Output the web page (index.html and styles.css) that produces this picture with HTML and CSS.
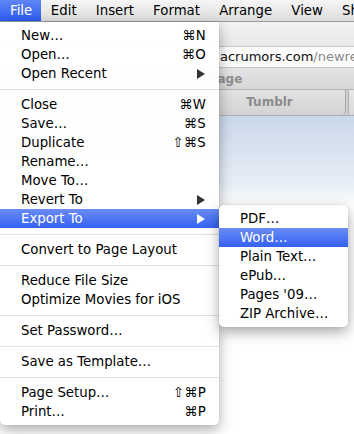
FILE: index.html
```html
<!DOCTYPE html>
<html>
<head>
<meta charset="utf-8">
<link rel="stylesheet" href="styles.css">
</head>
<body>
<div class="menubar">
  <span class="mb-item active">File</span>
  <span class="mb-item">Edit</span>
  <span class="mb-item">Insert</span>
  <span class="mb-item">Format</span>
  <span class="mb-item">Arrange</span>
  <span class="mb-item">View</span>
  <span class="mb-item">Share</span>
</div>
<div class="window">
  <div class="toolbar"></div>
  <div class="urlbar"><span class="url">acrumors.com<span class="path">/newreply.php</span></span></div>
  <div class="bookmarks"><span class="bm">Page</span></div>
  <div class="tabs"><div class="tab">Tumblr</div><div class="tab next"></div></div>
  <div class="content"></div>
</div>

<div class="menu">
  <div class="row"><span>New…</span><span class="sc">⌘N</span></div>
  <div class="row"><span>Open…</span><span class="sc">⌘O</span></div>
  <div class="row"><span>Open Recent</span><span class="arrow"></span></div>
  <div class="sep"></div>
  <div class="row"><span>Close</span><span class="sc">⌘W</span></div>
  <div class="row"><span>Save…</span><span class="sc">⌘S</span></div>
  <div class="row"><span>Duplicate</span><span class="sc">⇧⌘S</span></div>
  <div class="row"><span>Rename…</span></div>
  <div class="row"><span>Move To…</span></div>
  <div class="row"><span>Revert To</span><span class="arrow"></span></div>
  <div class="row hl"><span>Export To</span><span class="arrow"></span></div>
  <div class="sep"></div>
  <div class="row"><span>Convert to Page Layout</span></div>
  <div class="sep"></div>
  <div class="row"><span>Reduce File Size</span></div>
  <div class="row"><span>Optimize Movies for iOS</span></div>
  <div class="sep"></div>
  <div class="row"><span>Set Password…</span></div>
  <div class="sep"></div>
  <div class="row"><span>Save as Template…</span></div>
  <div class="sep"></div>
  <div class="row"><span>Page Setup…</span><span class="sc">⇧⌘P</span></div>
  <div class="row"><span>Print…</span><span class="sc">⌘P</span></div>
</div>

<div class="submenu">
  <div class="row"><span>PDF…</span></div>
  <div class="row hl"><span>Word…</span></div>
  <div class="row"><span>Plain Text…</span></div>
  <div class="row"><span>ePub…</span></div>
  <div class="row"><span>Pages '09…</span></div>
  <div class="row"><span>ZIP Archive…</span></div>
</div>
</body>
</html>
```

FILE: styles.css
```css
* { box-sizing: border-box; }
html, body {
  margin: 0;
  padding: 0;
  width: 354px;
  height: 434px;
  overflow: hidden;
  background: #fff;
  font-family: "DejaVu Sans", "Noto Sans", sans-serif;
  font-size: 13.3px;
  color: #000;
}
body { position: relative; }

.menubar {
  display: flex;
  height: 22px;
  padding-left: 1px;
  background: linear-gradient(#f6f6f6, #dcdcdc);
  border-bottom: 1px solid #9a9a9a;
  white-space: nowrap;
  overflow: hidden;
}
.mb-item {
  flex: none;
  padding: 0 9.6px;
  line-height: 21px;
  height: 21px;
}
.mb-item.active {
  margin-left: -1px;
  padding-left: 10px;
  padding-right: 9px;
  color: #fff;
  background: linear-gradient(#5f86f5, #2c5cf0);
}

.window { display: flex; flex-direction: column; }
.toolbar {
  height: 24px;
  background: linear-gradient(#f2f2f2, #e8e8e8);
}
.urlbar {
  height: 22px;
  padding-left: 220px;
  background: #fbfbfb;
  border-top: 1px solid #c8c8c8;
  border-bottom: 1px solid #c4c4c4;
  line-height: 20px;
  font-size: 13px;
  white-space: nowrap;
  overflow: hidden;
}
.url { color: #111; }
.path { color: #8a8a8a; }
.bookmarks {
  height: 22px;
  padding-left: 209px;
  background: linear-gradient(#e4e4e4, #d6d6d6);
  border-bottom: 1px solid #b8b8b8;
  line-height: 22px;
  font-weight: bold;
  font-size: 12px;
  color: #8d8d8d;
}
.tabs {
  display: flex;
  height: 26px;
  background: #cfcfcf;
  border-bottom: 1px solid #b0b0b0;
}
.tab {
  flex: none;
  width: 346px;
  padding-left: 194px;
  text-align: center;
  line-height: 25px;
  font-weight: bold;
  font-size: 12px;
  color: #8b8b8b;
  background: linear-gradient(#e2e2e2, #d3d3d3);
  border-right: 1px solid #a8a8a8;
  border-bottom-right-radius: 5px;
}
.tab.next {
  flex: 1;
  width: auto;
  padding: 0;
  background: linear-gradient(#e6e6e6, #dadada);
  border-left: 1px solid #b0b0b0;
  border-bottom-left-radius: 5px;
  border-right: 0;
  margin-left: 2px;
}
.content {
  height: 92px;
  background: linear-gradient(#cad8ea, #e8eef7 75%, #ffffff);
}

.menu {
  position: absolute;
  left: 0;
  top: 22px;
  width: 219px;
  padding: 4px 0 4px;
  background: rgba(255, 255, 255, 0.97);
  border-radius: 0 0 5px 5px;
  box-shadow: 0 5px 14px rgba(0, 0, 0, 0.32), 0 0 1px rgba(0, 0, 0, 0.3);
}
.row {
  display: flex;
  justify-content: space-between;
  align-items: center;
  height: 19px;
  line-height: 19px;
  padding: 0 13px 0 21px;
  white-space: nowrap;
}
.row.hl {
  color: #fff;
  background: linear-gradient(#6a8cf6, #3461f1);
}
.sc { letter-spacing: 0.2px; }
.arrow {
  width: 0;
  height: 0;
  margin-right: 1px;
  border-left: 8px solid #333;
  border-top: 5px solid transparent;
  border-bottom: 5px solid transparent;
}
.row.hl .arrow { border-left-color: #fff; }
.sep {
  height: 12px;
  display: flex;
  align-items: center;
}
.sep::before {
  content: "";
  display: block;
  width: 100%;
  height: 1px;
  background: #e1e1e1;
}

.submenu {
  position: absolute;
  left: 219px;
  top: 205px;
  width: 129px;
  padding: 4px 0;
  background: rgba(255, 255, 255, 0.97);
  border-radius: 5px;
  box-shadow: 0 5px 14px rgba(0, 0, 0, 0.35), 0 0 1px rgba(0, 0, 0, 0.35);
}
.submenu .row { padding: 0 10px 0 21px; }
```
